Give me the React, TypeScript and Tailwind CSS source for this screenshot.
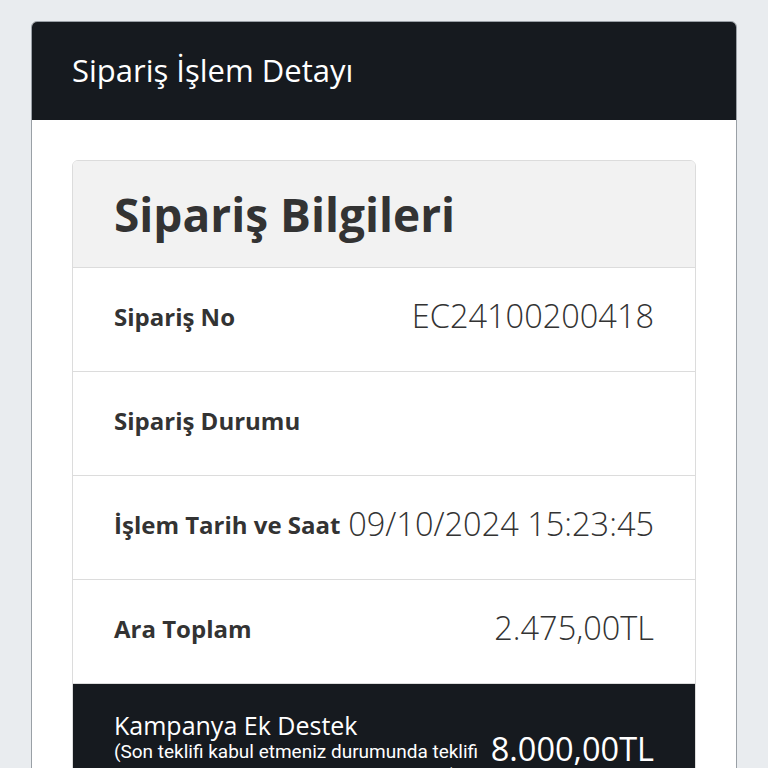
export default function App() {
  const rows = [
    { label: "Sipariş No", value: "EC24100200418" },
    { label: "Sipariş Durumu", value: "" },
    { label: "İşlem Tarih ve Saat", value: "09/10/2024 15:23:45" },
    { label: "Ara Toplam", value: "2.475,00TL" },
  ];

  return (
    <div className="h-[768px] overflow-hidden bg-[#e9ecef] px-[31px] pt-[21px] font-['Open_Sans',sans-serif]">
      <div className="rounded-t-md border border-[#9aa0a6] bg-white overflow-hidden">
        {/* header */}
        <div className="h-[98px] bg-[#161a1f] flex items-center px-[40px] pb-[2px]">
          <h1 className="text-[31px] text-white leading-none">Sipariş İşlem Detayı</h1>
        </div>

        {/* body */}
        <div className="px-[40px] pt-[40px]">
          <div className="rounded-t-md border border-[#dcdcdc] overflow-hidden">
            <div className="h-[107px] bg-[#f2f2f2] flex items-center px-[41px] border-b border-[#dcdcdc]">
              <h2 className="text-[46px] font-bold text-[#333] leading-none">Sipariş Bilgileri</h2>
            </div>

            {rows.map((r) => (
              <div
                key={r.label}
                className="h-[104px] flex items-center justify-between px-[41px] pb-[6px] border-b border-[#dcdcdc] bg-white whitespace-nowrap"
              >
                <span className="text-[24px] font-bold text-[#333]">{r.label}</span>
                <span className="text-[32.5px] font-light text-[#333]">{r.value}</span>
              </div>
            ))}

            <div className="bg-[#161a1f] flex items-center justify-between px-[41px] pt-[26px] pb-[20px]">
              <div className="text-white">
                <div className="text-[25px] leading-[30px]">Kampanya Ek Destek</div>
                <div className="text-[19px] leading-[24px] w-[372px] font-['Roboto',sans-serif]">
                  (Son teklifi kabul etmeniz durumunda teklifi kabul ettikten 30 gün sonra ödenecektir.)
                </div>
              </div>
              <span className="text-[32.5px] text-white">8.000,00TL</span>
            </div>
          </div>
        </div>
      </div>
    </div>
  );
}
